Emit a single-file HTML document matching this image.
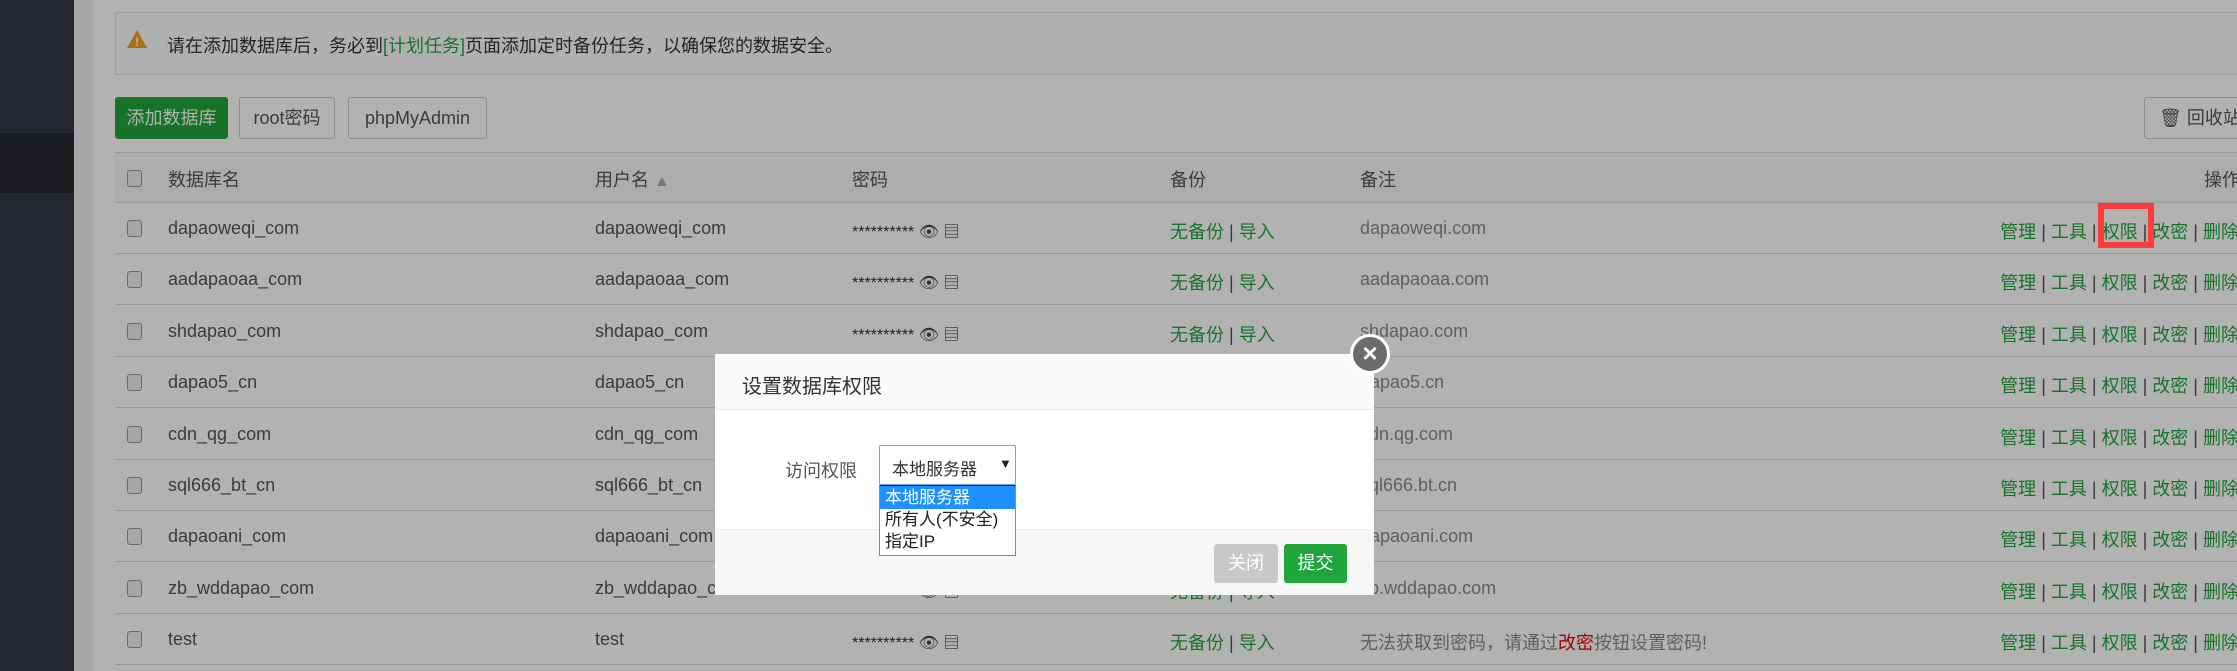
<!DOCTYPE html>
<html><head><meta charset="utf-8"><style>
*{margin:0;padding:0;box-sizing:border-box}
body{width:2237px;height:671px;overflow:hidden;position:relative;background:#f0f0f0;font-family:"Liberation Sans","Noto Sans CJK SC",sans-serif;font-size:18px;color:#555}
.a{position:absolute;white-space:nowrap}
.side{left:0;top:0;width:74px;height:671px;background:#353a43}
.panel{left:93px;top:0;width:2144px;height:671px;background:#fff}
.alert{left:115px;top:12px;width:2130px;height:63px;background:#fdfdfd;border:1px solid #e4e4e4}
.btn{top:97px;height:42px;border:1px solid #ccc;border-radius:3px;background:#fff;line-height:40px;text-align:center;font-size:18px;color:#555}
.thead{left:115px;top:152px;width:2130px;height:51px;background:#f6f6f6;border-top:1px solid #ddd;border-bottom:1px solid #ddd}
.row{left:115px;width:2130px;height:51px;border-bottom:1px solid #ddd}
.cb{width:15px;height:17px;border:1px solid #999;border-radius:3px;background:#eee}
.g{color:#20a53a}
.ov{left:0;top:0;width:2237px;height:671px;background:rgba(0,0,0,.3)}
</style></head><body>
<div class="a side"></div>
<div class="a" style="left:0;top:133px;width:74px;height:60px;background:#272a30"></div>
<div class="a panel"></div>
<div class="a alert"></div>
<div class="a" style="left:127px;top:30px;width:0;height:0;border-left:10px solid transparent;border-right:10px solid transparent;border-bottom:18px solid #f0a020"></div>
<div class="a" style="left:135px;top:35px;color:#fff;font-size:12px;font-weight:bold">!</div>
<div class="a" style="left:167px;top:32px;font-size:18px;color:#333">请在添加数据库后，务必到<span class="g">[计划任务]</span>页面添加定时备份任务，以确保您的数据安全。</div>
<div class="a btn" style="left:115px;width:113px;background:#20a53a;border-color:#20a53a;color:#fff">添加数据库</div>
<div class="a btn" style="left:239px;width:96px">root密码</div>
<div class="a btn" style="left:348px;width:139px">phpMyAdmin</div>
<div class="a btn" style="left:2144px;width:110px;text-align:left;padding-left:14px">🗑 回收站</div>
<div class="a thead"></div>
<div class="a cb" style="left:127px;top:170px"></div>
<div class="a" style="left:168px;top:166px">数据库名</div>
<div class="a" style="left:595px;top:166px">用户名 <span style="color:#aaa;font-size:16px">▲</span></div>
<div class="a" style="left:852px;top:166px">密码</div>
<div class="a" style="left:1170px;top:166px">备份</div>
<div class="a" style="left:1360px;top:166px">备注</div>
<div class="a" style="left:2204px;top:166px">操作</div>
<div id="rows"></div>
<script>
var d=[["dapaoweqi_com","dapaoweqi.com"],["aadapaoaa_com","aadapaoaa.com"],["shdapao_com","shdapao.com"],["dapao5_cn","dapao5.cn"],["cdn_qg_com","cdn.qg.com"],["sql666_bt_cn","sql666.bt.cn"],["dapaoani_com","dapaoani.com"],["zb_wddapao_com","zb.wddapao.com"],["test",null]];
var h="";
d.forEach(function(r,i){var t=203+i*51.4;var ty=t+15;
h+='<div class="a row" style="top:'+t+'px"></div>';
h+='<div class="a cb" style="left:127px;top:'+(t+17)+'px"></div>';
h+='<div class="a" style="left:168px;top:'+ty+'px">'+r[0]+'</div>';
h+='<div class="a" style="left:595px;top:'+ty+'px">'+r[0]+'</div>';
h+='<div class="a" style="left:852px;top:'+ty+'px;font-size:16px;color:#333">********** <span style="color:#444">👁 ▤</span></div>';
h+='<div class="a g" style="left:1170px;top:'+ty+'px">无备份 <span style="color:#555">|</span> 导入</div>';
h+='<div class="a" style="left:1360px;top:'+ty+'px;color:#888">'+(r[1]||'无法获取到密码，请通过<span style="color:#e00">改密</span>按钮设置密码!')+'</div>';
h+='<div class="a g" style="right:-2px;top:'+ty+'px">管理 <span style="color:#555">|</span> 工具 <span style="color:#555">|</span> 权限 <span style="color:#555">|</span> 改密 <span style="color:#555">|</span> 删除</div>';
});
document.getElementById('rows').innerHTML=h;
</script>
<div class="a ov" style="z-index:1"></div>
<div class="a" style="left:2098px;top:203px;width:56px;height:45px;border:6px solid #ff3b3b;z-index:2"></div>
<div class="a" style="z-index:3;left:715px;top:354px;width:659px;height:241px;background:#fff;border-radius:2px;overflow:hidden">
 <div class="a" style="left:0;top:0;width:659px;height:56px;border-bottom:1px solid #eee;background:#fafafa"></div>
 <div class="a" style="left:27px;top:16px;font-size:20px;color:#333">设置数据库权限</div>
 <div class="a" style="left:0;top:175px;width:659px;height:66px;background:#f5f6f6;border-top:1px solid #eee"></div>
 <div class="a" style="left:70px;top:103px;font-size:18px;color:#555">访问权限</div>
 <div class="a" style="left:164px;top:91px;width:137px;height:40px;border:1px solid #6fa0e8;border-radius:2px;background:#fff"></div>
 <div class="a" style="left:177px;top:101px;font-size:17px;color:#333">本地服务器</div>
 <div class="a" style="left:284px;top:102px;font-size:13px;color:#222">▼</div>
 <div class="a" style="left:164px;top:131px;width:137px;height:71px;border:1px solid #6a8fc8;border-top:1px solid #222;background:#fff"></div>
 <div class="a" style="left:165px;top:132px;width:135px;height:23px;background:#1e90ff"></div>
 <div class="a" style="left:170px;top:133px;font-size:17px;color:#fff;line-height:22px">本地服务器</div>
 <div class="a" style="left:170px;top:155px;font-size:17px;color:#222;line-height:22px">所有人(不安全)</div>
 <div class="a" style="left:170px;top:177px;font-size:17px;color:#222;line-height:22px">指定IP</div>
 <div class="a" style="left:499px;top:190px;width:64px;height:39px;background:#c8c8c8;border-radius:3px;color:#fff;text-align:center;line-height:39px">关闭</div>
 <div class="a" style="left:569px;top:190px;width:63px;height:39px;background:#20a53a;border-radius:3px;color:#fff;text-align:center;line-height:39px">提交</div>
</div>
<div class="a" style="z-index:4;left:1350px;top:334px;width:40px;height:40px;border-radius:50%;background:#6b6b6b;border:3px solid #fff;color:#fff;font-size:26px;line-height:33px;text-align:center;font-weight:bold">×</div>
</body></html>
